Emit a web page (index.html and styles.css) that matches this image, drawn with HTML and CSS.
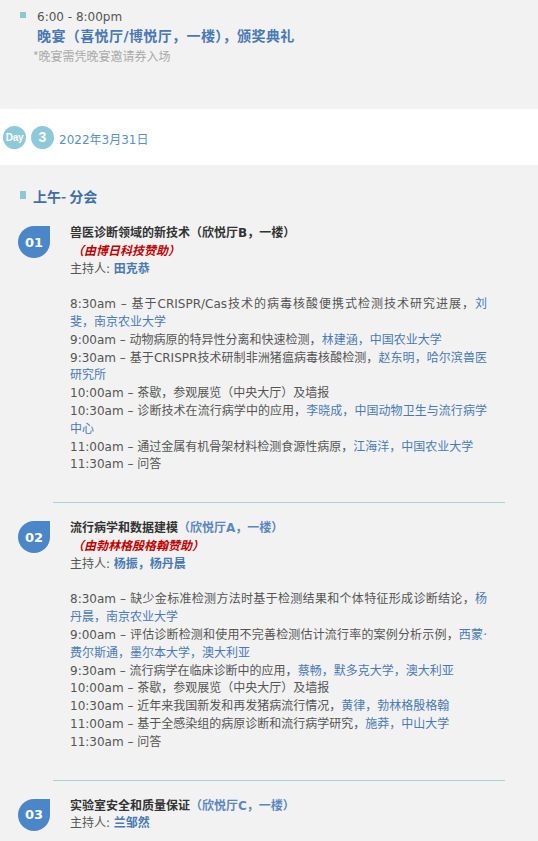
FILE: index.html
```html
<!DOCTYPE html>
<html lang="zh">
<head>
<meta charset="utf-8">
<title>Day 3</title>
<link rel="stylesheet" href="styles.css">
</head>
<body>
<section class="evening">
  <div class="ev-row">
    <span class="marker"></span>
    <div class="ev-text">
      <div class="ev-time">6:00 - 8:00pm</div>
      <div class="ev-title">晚宴（喜悦厅/博悦厅，一楼），颁奖典礼</div>
    </div>
  </div>
  <div class="ev-note">*晚宴需凭晚宴邀请券入场</div>
</section>

<section class="day-band">
  <span class="day-dot day-word">Day</span>
  <span class="day-dot day-num">3</span>
  <span class="day-date">2022年3月31日</span>
</section>

<h2 class="period"><span class="marker period-marker"></span>上午- 分会</h2>

<article class="session">
  <div class="badge">01</div>
  <div class="session-body">
    <div class="s-title">兽医诊断领域的新技术（欣悦厅B，一楼）</div>
    <div class="s-sponsor">（由博日科技赞助）</div>
    <div class="s-host">主持人: <span class="host-name">田克恭</span></div>
    <div class="items">
      <p class="item">8:30am – 基于CRISPR/Cas技术的病毒核酸便携式检测技术研究进展，<span class="link">刘斐，南京农业大学</span></p>
      <p class="item">9:00am – 动物病原的特异性分离和快速检测，<span class="link">林建涵，中国农业大学</span></p>
      <p class="item">9:30am – 基于CRISPR技术研制非洲猪瘟病毒核酸检测，<span class="link">赵东明，哈尔滨兽医研究所</span></p>
      <p class="item">10:00am – 茶歇，参观展览（中央大厅）及墙报</p>
      <p class="item">10:30am – 诊断技术在流行病学中的应用，<span class="link">李晓成，中国动物卫生与流行病学中心</span></p>
      <p class="item">11:00am – 通过金属有机骨架材料检测食源性病原，<span class="link">江海洋，中国农业大学</span></p>
      <p class="item">11:30am – 问答</p>
    </div>
  </div>
</article>

<hr class="divider">

<article class="session">
  <div class="badge">02</div>
  <div class="session-body">
    <div class="s-title">流行病学和数据建模<span class="venue">（欣悦厅A，一楼）</span></div>
    <div class="s-sponsor">（由勃林格殷格翰赞助）</div>
    <div class="s-host">主持人: <span class="host-name">杨振，杨丹晨</span></div>
    <div class="items">
      <p class="item">8:30am – 缺少金标准检测方法时基于检测结果和个体特征形成诊断结论，<span class="link">杨丹晨，南京农业大学</span></p>
      <p class="item">9:00am – 评估诊断检测和使用不完善检测估计流行率的案例分析示例，<span class="link">西蒙·费尔斯通，墨尔本大学，澳大利亚</span></p>
      <p class="item">9:30am – 流行病学在临床诊断中的应用，<span class="link">蔡畅，默多克大学，澳大利亚</span></p>
      <p class="item">10:00am – 茶歇，参观展览（中央大厅）及墙报</p>
      <p class="item">10:30am – 近年来我国新发和再发猪病流行情况，<span class="link">黄律，勃林格殷格翰</span></p>
      <p class="item">11:00am – 基于全感染组的病原诊断和流行病学研究，<span class="link">施莽，中山大学</span></p>
      <p class="item">11:30am – 问答</p>
    </div>
  </div>
</article>

<hr class="divider">

<article class="session">
  <div class="badge">03</div>
  <div class="session-body">
    <div class="s-title">实验室安全和质量保证<span class="venue">（欣悦厅C，一楼）</span></div>
    <div class="s-host">主持人: <span class="host-name">兰邹然</span></div>
  </div>
</article>
</body>
</html>
```

FILE: styles.css
```css
html, body {
  margin: 0;
  padding: 0;
}
body {
  background: #f2f2f2;
  font-family: "DejaVu Sans", "Noto Sans CJK SC", sans-serif;
  font-size: 12px;
  color: #555;
  width: 538px;
  overflow: hidden;
}

.marker {
  display: block;
  width: 6px;
  height: 6px;
  background: #8dc8d0;
  flex: none;
}

/* Evening block */
.evening {
  height: 109px;
  box-sizing: border-box;
  padding-top: 7px;
}
.ev-row {
  display: flex;
  padding-left: 20px;
}
.ev-row .marker {
  margin-top: 5px;
}
.ev-text {
  margin-left: 11px;
}
.ev-time {
  line-height: 20px;
  color: #555;
}
.ev-title {
  line-height: 19px;
  font-size: 14px;
  font-weight: bold;
  color: #4a78b5;
  letter-spacing: 0.4px;
}
.ev-note {
  margin-left: 33px;
  line-height: 20px;
  color: #aaa;
  font-family: "Noto Sans CJK SC", sans-serif;
}

/* Day band */
.day-band {
  background: #fff;
  height: 56px;
  display: flex;
  align-items: center;
  padding-left: 3px;
  gap: 5px;
}
.day-dot {
  width: 23px;
  height: 23px;
  border-radius: 50%;
  background: #8ec9d9;
  color: #fff;
  font-weight: bold;
  display: flex;
  align-items: center;
  justify-content: center;
  font-family: "Liberation Sans", sans-serif;
}
.day-word {
  font-size: 10px;
  letter-spacing: -0.3px;
}
.day-num {
  font-size: 14px;
}
.day-date {
  color: #5b8fc4;
  font-size: 12px;
  padding-top: 2px;
}

/* Period heading */
.period {
  margin: 21px 0 19px 0;
  padding-left: 20px;
  display: flex;
  align-items: center;
  font-size: 14px;
  line-height: 20px;
  font-weight: bold;
  color: #3f6faa;
  font-family: "Noto Sans CJK SC", sans-serif;
}
.period-marker {
  width: 6px;
  height: 8px;
  margin-right: 7px;
  margin-top: -3px;
}

/* Sessions */
.session {
  display: flex;
  padding-left: 18px;
}
.badge {
  flex: none;
  width: 32px;
  height: 32px;
  margin-top: 1px;
  border-radius: 50% 0 50% 50%;
  background: #4a86c8;
  color: #fff;
  font-family: "DejaVu Sans", sans-serif;
  font-weight: bold;
  font-size: 13px;
  display: flex;
  align-items: center;
  justify-content: center;
}
.session-body {
  margin-left: 20px;
  width: 417px;
  line-height: 17.8px;
}
.s-title {
  font-weight: bold;
  color: #333;
}
.venue {
  color: #5b87c0;
}
.s-sponsor {
  color: #c00000;
  font-style: italic;
  font-weight: bold;
  padding-left: 2px;
}
.host-name {
  color: #4a7ab5;
  font-weight: bold;
}
.items {
  margin-top: 17.8px;
}
.item {
  margin: 0;
  text-align: justify;
}
.link {
  color: #4a7ab5;
}

.divider {
  border: none;
  height: 1px;
  background: #a8d2d6;
  margin: 28px 0 17px 53px;
  width: 452px;
}
```
